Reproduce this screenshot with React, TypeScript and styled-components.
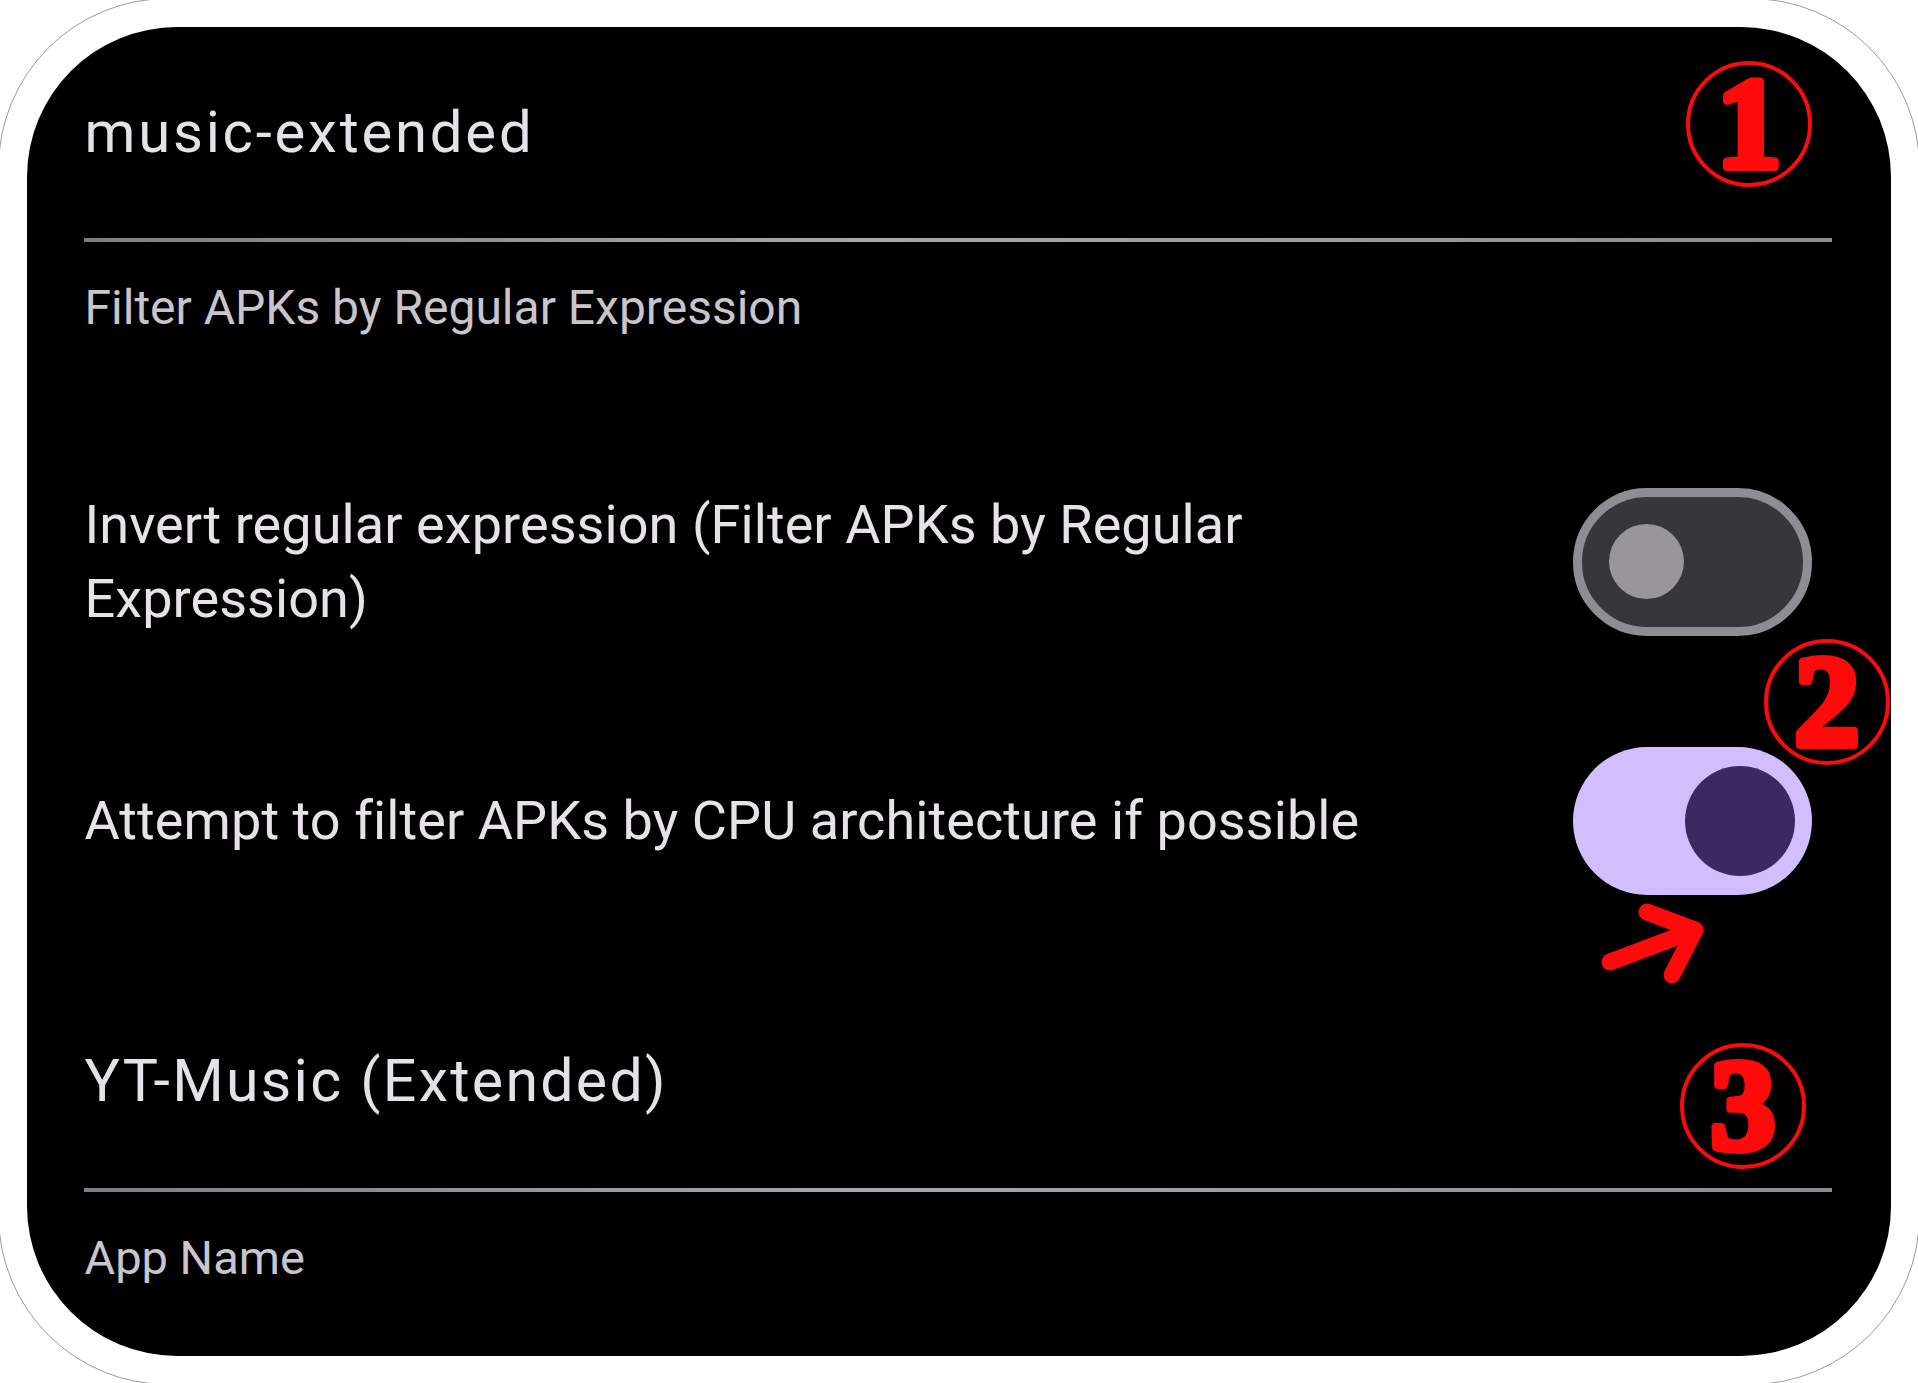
import React from "react";
import styled, { createGlobalStyle } from "styled-components";

const GlobalStyle = createGlobalStyle`
  html, body {
    margin: 0;
    padding: 0;
    background: #ffffff;
    overflow: hidden;
  }
  body {
    font-family: "Roboto", "Noto Sans", sans-serif;
  }
  * { box-sizing: border-box; }
`;

const Frame = styled.div`
  margin: -2px;
  width: 1922px;
  height: 1387px;
  border: 1.5px solid #9c9c9c;
  border-radius: 170px;
  padding: 27.5px 28.5px 28.5px 27.5px;
  background: #ffffff;
`;

const Card = styled.main`
  position: relative;
  height: 100%;
  background: #000000;
  border-radius: 150px;
  padding: 0 59px 0 57px;
  display: flex;
  flex-direction: column;
`;

const Header = styled.header`
  height: 211px;
  padding-top: 76px;
`;

const Title = styled.h1<{ $size: number; $spacing: number }>`
  margin: 0;
  padding-left: 1px;
  font-family: "Roboto", sans-serif;
  font-weight: 400;
  font-size: ${(p) => p.$size}px;
  line-height: 1;
  letter-spacing: ${(p) => p.$spacing}px;
  color: #e4e1e7;
`;

const Divider = styled.hr`
  margin: 0;
  border: none;
  height: 4px;
  background: linear-gradient(90deg, #7f7c86 0%, #a9a6b0 45%, #8e8b95 100%);
`;

const Caption = styled.div<{ $size: number }>`
  margin-top: 42px;
  padding-left: 1px;
  font-size: ${(p) => p.$size}px;
  line-height: 48px;
  color: #c9c5cd;
`;

const SettingRow = styled.div<{ $top: number }>`
  margin-top: ${(p) => p.$top}px;
  display: flex;
  align-items: center;
  gap: 120px;
  padding-right: 20px;
`;

const SettingLabel = styled.div`
  flex: 1;
  padding-left: 1px;
  font-size: 54px;
  line-height: 74px;
  letter-spacing: 0.08px;
  color: #e6e2e8;
`;

const Track = styled.div<{ $on: boolean }>`
  flex: none;
  width: 239px;
  height: 148px;
  border-radius: 74px;
  display: flex;
  align-items: center;
  justify-content: ${(p) => (p.$on ? "flex-end" : "flex-start")};
  padding: ${(p) => (p.$on ? "0 17px" : "0 27px")};
  background: ${(p) => (p.$on ? "#d2befc" : "#38363d")};
  border: ${(p) => (p.$on ? "none" : "9px solid #8f8c94")};
`;

const Knob = styled.span<{ $on: boolean }>`
  display: block;
  width: ${(p) => (p.$on ? 110 : 75)}px;
  height: ${(p) => (p.$on ? 110 : 75)}px;
  border-radius: 50%;
  background: ${(p) => (p.$on ? "#3c2862" : "#99959d")};
`;

const SectionTitleBlock = styled.div`
  margin-top: 156px;
  height: 137px;
`;

const MarkerSvg = styled.svg<{ $x: number; $y: number }>`
  position: absolute;
  left: ${(p) => p.$x}px;
  top: ${(p) => p.$y}px;
  width: 130px;
  height: 130px;
  overflow: visible;
`;

const MarkerDigit = styled.text`
  font-family: "Liberation Serif", "DejaVu Serif", serif;
  font-weight: 700;
  font-size: 130px;
`;

const ArrowMark = styled.svg`
  position: absolute;
  left: 1563px;
  top: 868px;
  width: 130px;
  height: 100px;
  overflow: visible;
`;

function Switch({ on }: { on: boolean }) {
  return (
    <Track $on={on} role="switch" aria-checked={on}>
      <Knob $on={on} />
    </Track>
  );
}

function Marker({ x, y, n }: { x: number; y: number; n: string }) {
  return (
    <MarkerSvg $x={x} $y={y} viewBox="0 0 130 130">
      <circle cx="65" cy="65" r="61" fill="none" stroke="#ff0a0a" strokeWidth="4" />
      <MarkerDigit
        x="65"
        y="108"
        textAnchor="middle"
        fill="#ff0a0a"
        stroke="#ff0a0a"
        strokeWidth="8"
        strokeLinejoin="round"
      >
        {n}
      </MarkerDigit>
    </MarkerSvg>
  );
}

export default function App() {
  return (
    <>
      <GlobalStyle />
      <Frame>
        <Card>
          <Header>
            <Title $size={58} $spacing={2.8}>music-extended</Title>
          </Header>
          <Divider />
          <Caption $size={48}>Filter APKs by Regular Expression</Caption>

          <SettingRow $top={156}>
            <SettingLabel>
              Invert regular expression (Filter APKs by Regular Expression)
            </SettingLabel>
            <Switch on={false} />
          </SettingRow>

          <SettingRow $top={111}>
            <SettingLabel>Attempt to filter APKs by CPU architecture if possible</SettingLabel>
            <Switch on={true} />
          </SettingRow>

          <SectionTitleBlock>
            <Title $size={59} $spacing={2.3}>YT-Music (Extended)</Title>
          </SectionTitleBlock>
          <Divider />
          <Caption $size={47}>App Name</Caption>

          <Marker x={1657} y={32} n="1" />
          <Marker x={1735} y={610} n="2" />
          <Marker x={1651} y={1014} n="3" />

          <ArrowMark viewBox="0 0 130 100">
            <g fill="none" stroke="#ff0a0a" strokeWidth="17" strokeLinecap="round" strokeLinejoin="round">
              <path d="M20 67 L105 35" />
              <path d="M57 17 L105 35 L82 80" />
            </g>
          </ArrowMark>
        </Card>
      </Frame>
    </>
  );
}
